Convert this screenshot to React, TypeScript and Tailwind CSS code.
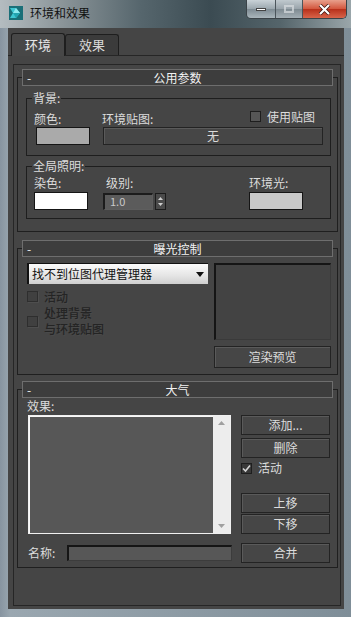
import React from "react";

function Btn({ children, className = "" }: { children?: React.ReactNode; className?: string }) {
  return (
    <div
      className={`flex items-center justify-center border border-[#232323] bg-[#464646] text-[12px] leading-none text-[#dcdcdc] shadow-[inset_1px_1px_0_#5a5a5a] ${className}`}
    >
      {children}
    </div>
  );
}

function Check({ checked = false, disabled = false }: { checked?: boolean; disabled?: boolean }) {
  if (disabled) {
    return <span className="w-[11px] h-[11px] shrink-0 border border-[#2e2e2e] bg-[#404040] shadow-[1px_1px_0_#4e4e4e]" />;
  }
  return (
    <span className="w-[11px] h-[11px] shrink-0 border border-[#1e1e1e] bg-[#565656] flex items-center justify-center">
      {checked && (
        <svg width="9" height="9" viewBox="0 0 9 9">
          <path d="M1 4.5 L3.5 7 L8 1.5" stroke="#d4d4d4" strokeWidth="1.6" fill="none" />
        </svg>
      )}
    </span>
  );
}

function Rollout({ title, className = "", children }: { title: string; className?: string; children?: React.ReactNode }) {
  return (
    <div className={`ml-[3px] mr-[2px] border border-[#1f1f1f] ${className}`}>
      <div className="-mt-[9px] mx-[4px] h-[17px] border border-[#6e6e6e] bg-[#3d3d3d] flex items-center text-[12px] leading-none text-[#f2f2f2]">
        <span className="pl-[4px] w-[22px]">-</span>
        <span className="flex-1 text-center pr-[22px]">{title}</span>
      </div>
      {children}
    </div>
  );
}

function Swatch({ color, className = "" }: { color: string; className?: string }) {
  return <div className={`h-[18px] w-[54px] border border-[#151515] ${color} ${className}`} />;
}

export default function App() {
  return (
    <div className="w-[351px] h-[617px] overflow-hidden flex flex-col bg-[linear-gradient(90deg,#8794a0,#9aa7b0_3%,#7f8e98_100%)] font-['Noto_Sans_CJK_SC','Noto_Sans',sans-serif]">
      {/* title bar */}
      <div className="h-[28px] shrink-0 flex items-start bg-[linear-gradient(90deg,#b4bcc0_0%,#8a9498_18%,#56666d_40%,#3b4b52_60%,#55656b_80%,#9aa6aa_100%)]">
        <div className="flex items-center pl-[9px] pt-[6px]">
          <svg width="14" height="14" viewBox="0 0 14 14">
            <rect x="0" y="0" width="14" height="14" fill="#1a6f78" />
            <path d="M1 2 L7 2 L11 7 L7 12 L1 12 L4 7 Z" fill="#3ec6d2" />
            <path d="M4 7 L7 2 L11 7 Z" fill="#8ee9ef" />
            <path d="M4 7 L11 7 L7 12 Z" fill="#23a3b0" />
          </svg>
          <span className="ml-[7px] text-[12px] leading-none text-[#111]">环境和效果</span>
        </div>
        <div className="ml-auto mr-[4px] flex h-[19px] rounded-b-[5px] border border-t-0 border-[#3b4348] overflow-hidden">
          <div className="w-[29px] flex items-center justify-center bg-[linear-gradient(180deg,#c9d2d7,#9aa6ad_50%,#7e8b93_51%,#aab6bc)] border-r border-[#4b555b]">
            <span className="w-[10px] h-[3px] bg-white border border-[#444]" />
          </div>
          <div className="w-[27px] flex items-center justify-center bg-[linear-gradient(180deg,#c0c9ce,#98a3aa_50%,#7e8a91_51%,#a4afb5)] border-r border-[#4b555b]">
            <span className="w-[10px] h-[8px] border-2 border-[#d8dde0] opacity-70" />
          </div>
          <div className="w-[43px] flex items-center justify-center bg-[linear-gradient(180deg,#e8a08c,#d2553c_50%,#b8301a_51%,#d8644a)]">
            <svg width="13" height="11" viewBox="0 0 13 11">
              <path d="M2 1 L11 10 M11 1 L2 10" stroke="#3a1510" strokeWidth="3.6" />
              <path d="M2 1 L11 10 M11 1 L2 10" stroke="#ffffff" strokeWidth="2.2" />
            </svg>
          </div>
        </div>
      </div>

      {/* client */}
      <div className="ml-[8px] mr-[7px] flex-1 flex flex-col bg-[#454545] text-[12px] text-[#dcdcdc]">
        {/* tabs */}
        <div className="h-[28px] shrink-0 flex items-end pl-[3px] border-b border-[#262626]">
          <div className="w-[54px] h-[23px] -mb-px flex items-center justify-center rounded-t-[3px] border border-b-0 border-[#1e1e1e] bg-[#474747] text-[13px] text-[#e8e8e8]">
            环境
          </div>
          <div className="w-[54px] h-[21px] flex items-center justify-center rounded-t-[3px] border border-b-0 border-[#1e1e1e] bg-[#3b3b3b] text-[13px] text-[#d8d8d8]">
            效果
          </div>
        </div>

        {/* tab page */}
        <div className="flex-1 ml-[5px] mr-[3px] mt-[8px] mb-[3px] border border-[#262626] flex flex-col">
          {/* 公用参数 */}
          <Rollout title="公用参数" className="mt-[12px]">
            <fieldset className="mt-[4px] ml-[8px] mr-[6px] border border-[#1e1e1e] pt-[5px] pb-[10px]">
              <legend className="ml-[5px] px-[1px] leading-[16px]">背景:</legend>
              <div className="flex pl-[7px]">
                <div className="w-[68px] flex flex-col">
                  <span className="h-[16px] leading-[16px]">颜色:</span>
                  <Swatch color="bg-[#aaaaaa]" className="ml-[2px]" />
                </div>
                <div className="flex flex-col">
                  <div className="h-[16px] flex items-start">
                    <span className="w-[148px] leading-[16px]">环境贴图:</span>
                    <Check />
                    <span className="ml-[6px] leading-[12px]">使用贴图</span>
                  </div>
                  <Btn className="ml-[1px] w-[220px] h-[18px]">无</Btn>
                </div>
              </div>
            </fieldset>

            <fieldset className="mt-[2px] ml-[8px] mr-[6px] mb-[12px] border border-[#1e1e1e] pt-[1px] pb-[8px]">
              <legend className="ml-[5px] px-[1px] leading-[16px]">全局照明:</legend>
              <div className="flex pl-[7px]">
                <div className="w-[69px] flex flex-col">
                  <span className="h-[17px] leading-[16px]">染色:</span>
                  <Swatch color="bg-white" />
                </div>
                <div className="w-[146px] flex flex-col">
                  <span className="h-[17px] leading-[16px] pl-[3px]">级别:</span>
                  <div className="flex items-center h-[18px]">
                    <div className="w-[50px] h-[17px] border-2 border-r border-b border-[#1c1c1c] border-r-[#5e5e5e] border-b-[#5e5e5e] bg-[#5b5b5b] text-[11px] leading-[13px] text-[#c8c8c8] pl-[5px]">
                      1.0
                    </div>
                    <div className="ml-[2px] w-[11px] h-[17px] border border-[#1c1c1c] bg-[#4a4a4a] flex flex-col items-center justify-center gap-[3px]">
                      <svg width="5" height="3" viewBox="0 0 5 3"><path d="M0 3 L2.5 0 L5 3 Z" fill="#cfcfcf" /></svg>
                      <svg width="5" height="3" viewBox="0 0 5 3"><path d="M0 0 L2.5 3 L5 0 Z" fill="#cfcfcf" /></svg>
                    </div>
                  </div>
                </div>
                <div className="flex flex-col">
                  <span className="h-[17px] leading-[16px]">环境光:</span>
                  <Swatch color="bg-[#c9c9c9]" />
                </div>
              </div>
            </fieldset>
          </Rollout>

          {/* 曝光控制 */}
          <Rollout title="曝光控制" className="mt-[16px]">
            <div className="flex pl-[9px] pt-[6px] pb-[6px]">
              <div className="w-[181px] flex flex-col">
                <div className="h-[21px] flex items-center border-l-2 border-t border-[#111] bg-[linear-gradient(180deg,#fbfbfb,#e4e4e4_60%,#cfcfcf)] pl-[3px] pr-[4px]">
                  <span className="flex-1 text-[12px] leading-none text-[#111]">找不到位图代理管理器</span>
                  <svg width="8" height="5" viewBox="0 0 8 5"><path d="M0 0 L8 0 L4 5 Z" fill="#111" /></svg>
                </div>
                <div className="mt-[6px] h-[13px] flex items-center">
                  <Check disabled />
                  <span className="ml-[6px] leading-[13px] font-medium text-[#242424] [text-shadow:1px_1px_0_#4a4a4a]">活动</span>
                </div>
                <div className="mt-[2px] flex items-center">
                  <Check disabled />
                  <span className="ml-[6px] leading-[16px] font-medium text-[#242424] [text-shadow:1px_1px_0_#4a4a4a]">
                    处理背景
                    <br />
                    与环境贴图
                  </span>
                </div>
              </div>
              <div className="ml-[6px] w-[117px] flex flex-col">
                <div className="h-[77px] border-2 border-r border-b border-[#151515] border-r-[#3a3a3a] border-b-[#3a3a3a] bg-[#434343]" />
                <Btn className="mt-[6px] h-[22px]">渲染预览</Btn>
              </div>
            </div>
          </Rollout>

          {/* 大气 */}
          <Rollout title="大气" className="mt-[14px]">
            <div className="pl-[9px] leading-[16px]">效果:</div>
            <div className="flex pl-[10px] mt-[1px]">
              <div className="w-[203px] h-[119px] border border-[#f0f0f0] flex">
                <div className="flex-1 bg-[#575757] border-t border-l border-[#f8f8f8]" />
                <div className="w-[17px] bg-[#ededed] flex flex-col items-center justify-between py-[5px]">
                  <svg width="7" height="4" viewBox="0 0 7 4"><path d="M0 4 L3.5 0 L7 4 Z" fill="#a0a0a0" /></svg>
                  <svg width="7" height="4" viewBox="0 0 7 4"><path d="M0 0 L3.5 4 L7 0 Z" fill="#a0a0a0" /></svg>
                </div>
              </div>
              <div className="ml-[10px] w-[89px] flex flex-col">
                <Btn className="h-[20px]">添加...</Btn>
                <Btn className="mt-[3px] h-[20px]">删除</Btn>
                <div className="mt-[4px] h-[12px] flex items-center">
                  <span className="w-[11px] h-[11px] shrink-0 border border-[#1e1e1e] bg-[#383838] flex items-center justify-center">
                    <svg width="9" height="9" viewBox="0 0 9 9">
                      <path d="M1 4.5 L3.5 7 L8 1.5" stroke="#d4d4d4" strokeWidth="1.6" fill="none" />
                    </svg>
                  </span>
                  <span className="ml-[6px] leading-[12px]">活动</span>
                </div>
                <Btn className="mt-[19px] h-[20px]">上移</Btn>
                <Btn className="mt-[1px] h-[20px]">下移</Btn>
              </div>
            </div>
            <div className="flex items-center pl-[10px] mt-[9px] mb-[4px] h-[20px]">
              <span className="w-[39px]">名称:</span>
              <div className="w-[165px] h-[16px] border-2 border-r border-b border-[#151515] border-r-[#3c3c3c] border-b-[#3c3c3c] bg-[#575757]" />
              <Btn className="ml-[9px] w-[89px] h-[20px]">合并</Btn>
            </div>
          </Rollout>
        </div>
      </div>
      <div className="h-[8px] shrink-0" />
    </div>
  );
}
